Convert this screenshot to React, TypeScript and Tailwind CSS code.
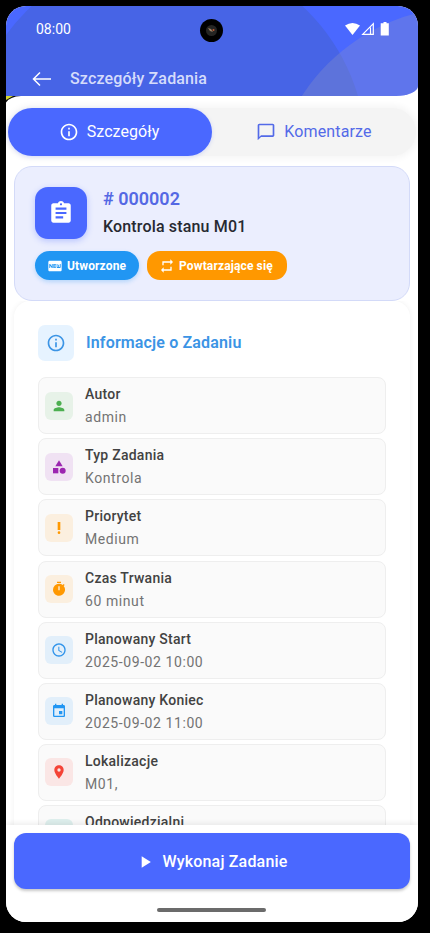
import React from 'react';
import {
  MdAccessTime,
  MdAssignment,
  MdCategory,
  MdChatBubbleOutline,
  MdEvent,
  MdFiberNew,
  MdInfoOutline,
  MdLocationOn,
  MdPeople,
  MdPerson,
  MdPlayArrow,
  MdPriorityHigh,
  MdRepeat,
  MdTimer,
} from 'react-icons/md';
import type { IconType } from 'react-icons';

interface TaskField {
  label: string;
  value?: string;
  icon: IconType;
  tile: string;
}

const fields: TaskField[] = [
  { label: 'Autor', value: 'admin', icon: MdPerson, tile: 'bg-[#e7f2e8] text-[#4caf50]' },
  { label: 'Typ Zadania', value: 'Kontrola', icon: MdCategory, tile: 'bg-[#f0e2f3] text-[#9c27b0]' },
  { label: 'Priorytet', value: 'Medium', icon: MdPriorityHigh, tile: 'bg-[#fbefdf] text-[#ff9800]' },
  { label: 'Czas Trwania', value: '60 minut', icon: MdTimer, tile: 'bg-[#fbefdf] text-[#ff9800]' },
  { label: 'Planowany Start', value: '2025-09-02 10:00', icon: MdAccessTime, tile: 'bg-[#e2effa] text-[#2f93ea]' },
  { label: 'Planowany Koniec', value: '2025-09-02 11:00', icon: MdEvent, tile: 'bg-[#e2effa] text-[#2196f3]' },
  { label: 'Lokalizacje', value: 'M01,', icon: MdLocationOn, tile: 'bg-[#fae6e5] text-[#f44336]' },
  { label: 'Odpowiedzialni', icon: MdPeople, tile: 'bg-[#deefed] text-[#009688]' },
];

const StatusBar: React.FC = () => (
  <div className="relative flex h-[45px] items-center justify-between pl-[30px] pr-[28px]">
    <span className="pt-px text-[14px] text-white">08:00</span>
    <div className="absolute left-[194px] top-[13px] h-[23px] w-[23px] rounded-full bg-black">
      <svg className="h-full w-full" viewBox="0 0 23 23">
        <circle cx="11.5" cy="11.5" r="5.5" fill="#252523" />
        <path d="M8 9l3 1 2 3-3-1z" fill="#9a8064" />
        <circle cx="13.5" cy="11" r="1" fill="#c45b35" />
      </svg>
    </div>
    <svg className="h-[14px] w-[46px]" viewBox="0 0 46 14">
      <path d="M1 3.6Q8.500-1.600 16 3.600L8.500 13z" fill="#fff" />
      <path d="M29.300 1.600V12.400H18.700z M26.500 5.500V12" fill="none" stroke="#fff" strokeWidth="1.200" />
      <path d="M39.500 0h3v1.300h2.300V13.500h-8.100V1.300h2.800z" fill="#fff" />
    </svg>
  </div>
);

const Header: React.FC = () => (
  <header className="relative h-[89.5px] shrink-0 overflow-hidden rounded-br-[22px_10px] bg-[#4a68ff]">
    <svg className="absolute left-0 top-0 h-[90px] w-[412px]" viewBox="0 0 412 90">
      <circle cx="161" cy="146" r="199" fill="#4764e6" />
      <circle cx="459" cy="195" r="194" fill="#8a91c8" fillOpacity="0.34" />
    </svg>
    <StatusBar />
    <div className="relative flex h-[55px] items-center pl-[26px]">
      <svg className="h-[16px] w-[20px]" viewBox="0 0 20 16" fill="none" stroke="#fff" strokeWidth="1.5">
        <path d="M19 8H1.500M8 1.500L1.500 8L8 14.500" />
      </svg>
      <h1 className="ml-[18px] text-[16px] font-medium tracking-[0.15px] text-[#d5dcfb]">Szczegóły Zadania</h1>
    </div>
  </header>
);

const Tabs: React.FC = () => (
  <div className="relative shrink-0 px-[2px] pt-[12.5px]">
    <svg className="absolute left-0 top-0 h-[7px] w-[15px]" viewBox="0 0 15 7">
      <path d="M0 0H15Q4 0.500 0 6.500z" fill="#111" />
      <path d="M0 0H7L0 4z" fill="#d6d832" />
    </svg>
    <div className="flex h-[48px] rounded-full bg-[#f4f4f4] shadow-[0_0_6px_3px_#f6f6f6]">
      <button className="flex w-1/2 items-center justify-center gap-2 rounded-full bg-[#4a68ff] pb-[1px] pr-[2px] text-[16px] tracking-[0.07px] text-white shadow-[0_1px_4px_#4a68ff33]">
        <MdInfoOutline size={20} />
        Szczegóły
      </button>
      <button className="flex w-1/2 items-center justify-center gap-2 pb-[1px] text-[16px] tracking-[0.13px] text-[#536ae8]">
        <MdChatBubbleOutline size={20} />
        Komentarze
      </button>
    </div>
  </div>
);

const TaskCard: React.FC = () => (
  <section className="mx-2 mt-[10px] h-[135px] shrink-0 rounded-[18px] border border-[#d3daf8] bg-[#ebeefe] pl-[20px] pt-[20px]">
    <div className="flex gap-4">
      <div className="flex h-[52px] w-[52px] items-center justify-center rounded-[13px] bg-[#4a68ff] text-white shadow-[0_2px_6px_#4a68ff50]">
        <MdAssignment size={26} />
      </div>
      <div>
        <p className="text-[18px] font-semibold leading-[24px] text-[#5468e4]">#&nbsp;000002</p>
        <h2 className="mt-1 text-[16px] font-medium leading-[24px] tracking-[0.16px] text-[#272931]">Kontrola stanu M01</h2>
      </div>
    </div>
    <div className="mt-3 flex gap-2 text-[12px] font-bold text-white">
      <span className="flex h-[29px] w-[104px] items-center gap-[4px] rounded-full bg-[#2196f3] pl-[12px] tracking-[0.13px] shadow-[0_2px_4px_#2196f344]">
        <MdFiberNew size={16} />
        Utworzone
      </span>
      <span className="flex h-[29px] w-[140px] items-center gap-[4px] rounded-[13px] bg-[#ff9800] pl-[12px] tracking-[0.13px]">
        <MdRepeat size={16} />
        Powtarzające się
      </span>
    </div>
  </section>
);

const FieldRow: React.FC<{ field: TaskField }> = ({ field }) => {
  const Icon = field.icon;
  return (
    <li className="flex h-[57px] shrink-0 items-center rounded-[8px] border border-[#eeeeee] bg-[#fafafa] pl-[6px]">
      <div className={`flex h-[28px] w-[28px] items-center justify-center rounded-[6px] ${field.tile}`}>
        <Icon size={16} />
      </div>
      <div className="ml-3 h-[45px] text-[14px] leading-[23px]">
        <p className="font-medium tracking-[0.25px] text-[#424242]">{field.label}</p>
        {field.value && <p className="tracking-[0.58px] text-[#737373]">{field.value}</p>}
      </div>
    </li>
  );
};

const TaskInfo: React.FC = () => (
  <section className="mx-2 rounded-t-[16px] bg-white px-6 pt-6 shadow-[0_0_5px_1px_#f5f5f5]">
    <div className="flex items-center gap-3">
      <div className="flex h-[36px] w-[36px] items-center justify-center rounded-[7px] bg-[#e6f3ff] text-[#3b94e5]">
        <MdInfoOutline size={20} />
      </div>
      <h3 className="text-[16px] font-semibold tracking-[0.15px] text-[#3b94e5]">Informacje o Zadaniu</h3>
    </div>
    <ul className="mt-4 flex flex-col gap-[4.100px] pt-[0.300px]">
      {fields.map((field) => (
        <FieldRow key={field.label} field={field} />
      ))}
    </ul>
  </section>
);

const App: React.FC = () => {
  return (
    <div className="h-[933px] w-[430px] bg-black p-[6px] font-['Roboto',sans-serif]">
      <div className="flex h-[916px] w-[412px] flex-col overflow-hidden rounded-[20px] bg-white">
        <Header />
        <Tabs />
        <TaskCard />
        <main className="min-h-0 flex-1 overflow-hidden">
          <TaskInfo />
        </main>
        <footer className="relative flex h-[97px] shrink-0 flex-col items-center bg-white px-2 pt-[8px] shadow-[0_-2px_5px_#00000012]">
          <button className="flex h-[56px] w-full items-center justify-center gap-[7px] rounded-[12px] bg-[#4a68ff] pr-px pt-px text-[16px] font-medium tracking-[0.18px] text-white shadow-[0_2px_3px_#00000038]">
            <MdPlayArrow size={20} />
            Wykonaj Zadanie
          </button>
          <div className="mr-px mt-[18.5px] h-[4px] w-[109px] rounded-full bg-[#6b6b6b]" />
        </footer>
      </div>
    </div>
  );
};

export default App;
